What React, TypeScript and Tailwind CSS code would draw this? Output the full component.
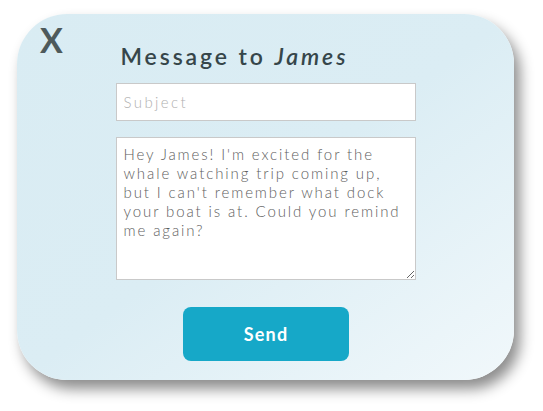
const App = () => {
    return (
        <div className="w-[543px] h-[411px] bg-white pt-[14px] pl-[17px]" style={{fontFamily: "Lato, 'Open Sans', sans-serif"}}>
            <div className="relative w-[497px] h-[366px] rounded-[50px] bg-gradient-to-br from-[#d9ecf3] via-[#dbedf4] to-[#f1f8fb] shadow-[6px_9px_14px_rgba(0,0,0,0.45)] flex flex-col items-center">
                <div className="absolute left-[23px] top-[9px] text-[34px] leading-none font-bold text-[#4e5a5b]">X</div>
                <div className="w-[300px] flex flex-col">
                    <h1 className="pl-[5px] pt-[27px] h-[69px] text-[23px] leading-[30px] font-semibold tracking-[2.9px] text-[#36464a]">
                        Message to <span className="italic">James</span>
                    </h1>
                    <input
                        className="h-[38px] w-[300px] bg-white border border-[#c9c9c9] px-[7px] text-[15px] font-light tracking-[2.4px] text-[#666] placeholder:text-[#b0b0b0] outline-none"
                        placeholder="Subject"
                    />
                    <textarea
                        className="mt-[16px] h-[143px] w-[300px] bg-white border border-[#c9c9c9] pl-[7px] pr-[5px] pt-[7px] text-[15px] leading-[19px] font-light tracking-[1.9px] text-[#5e5e5e] outline-none resize-y"
                        defaultValue="Hey James! I'm excited for the whale watching trip coming up, but I can't remember what dock your boat is at. Could you remind me again?"
                    />
                    <button className="mt-[27px] self-center ml-[1px] w-[166px] h-[54px] rounded-[8px] bg-[#16a8c8] text-white text-[18px] font-bold tracking-[1.2px]">
                        Send
                    </button>
                </div>
            </div>
        </div>
    )
};

export default App;
